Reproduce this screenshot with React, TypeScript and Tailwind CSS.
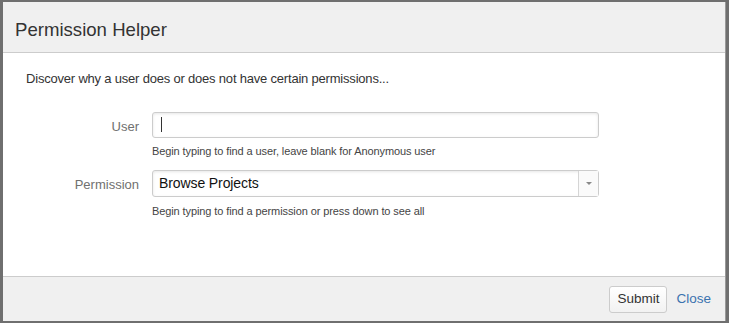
const font = { fontFamily: '"Liberation Sans", Arial, sans-serif' };

const App = () => {
  return (
    <div className="w-[729px] h-[323px] bg-[#6f6f6f] pt-[2px] px-[3px] pb-[2px]" style={font}>
      <div className="h-full flex flex-col bg-white border-r border-[#999]">
        {/* header */}
        <div className="h-[51px] shrink-0 bg-[#f0f0f0] border-b border-[#cccccc] flex items-center px-[12px] pt-[7px]">
          <h2 className="text-[18.6px] text-[#333] leading-none">Permission Helper</h2>
        </div>

        {/* body */}
        <div className="flex-1 px-[23px] pt-[16px]">
          <p className="text-[13px] tracking-[-0.2px] text-[#333]">
            Discover why a user does or does not have certain permissions...
          </p>

          <div className="mt-[23px] flex flex-col gap-[11px]">
            <div className="flex">
              <label className="w-[126px] text-right pr-[13px] text-[13px] text-[#707070] pt-[5px]">User</label>
              <div className="flex flex-col">
                <div className="w-[447px] h-[26px] border border-[#cccccc] rounded-[3px] bg-white shadow-[inset_0_1px_3px_rgba(0,0,0,0.1)] flex items-center px-[8px]">
                  <span className="w-px h-[15px] bg-[#333]" />
                </div>
                <span className="mt-[5px] text-[11px] tracking-[-0.1px] text-[#444]">
                  Begin typing to find a user, leave blank for Anonymous user
                </span>
              </div>
            </div>

            <div className="flex">
              <label className="w-[126px] text-right pr-[13px] text-[13px] text-[#707070] pt-[5px]">Permission</label>
              <div className="flex flex-col">
                <div className="w-[447px] h-[27px] border border-[#cccccc] rounded-[3px] bg-white shadow-[inset_0_1px_3px_rgba(0,0,0,0.1)] flex items-center">
                  <span className="flex-1 px-[6px] text-[14px] tracking-[-0.1px] text-[#111]">Browse Projects</span>
                  <span className="w-[20px] h-full border-l border-[#d5d5d5] bg-[#fafafa] flex items-center justify-center">
                    <svg width="6" height="3" viewBox="0 0 6 3">
                      <path d="M0 0h6L3 3z" fill="#888" />
                    </svg>
                  </span>
                </div>
                <span className="mt-[6px] text-[11px] tracking-[-0.1px] text-[#444]">
                  Begin typing to find a permission or press down to see all
                </span>
              </div>
            </div>
          </div>
        </div>

        {/* footer */}
        <div className="h-[45px] shrink-0 bg-[#f0f0f0] border-t border-[#cccccc] flex items-center justify-end pr-[14px] gap-[9px] pt-[1px]">
          <button className="h-[27px] w-[58px] border border-[#cccccc] rounded-[3px] bg-gradient-to-b from-white to-[#f2f2f2] text-[13.5px] text-[#333]">
            Submit
          </button>
          <a className="text-[13.5px] text-[#3b73af]">Close</a>
        </div>
      </div>
    </div>
  );
};

export default App;
